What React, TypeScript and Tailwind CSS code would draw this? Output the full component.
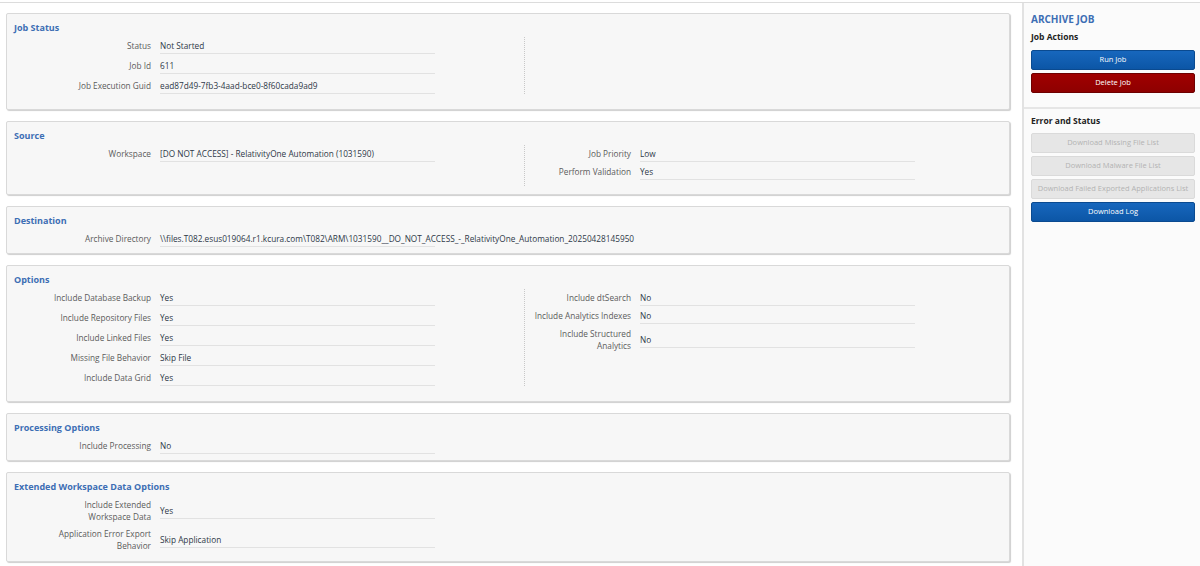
import React from 'react';

type Field = { label: string; value: string };

const font = { fontFamily: '"Open Sans", "Noto Sans", sans-serif' };

function Row({ field, labelWidth, valueWidth }: { field: Field; labelWidth: string; valueWidth: string }) {
  return (
    <div className="flex items-center">
      <div className={`${labelWidth} shrink-0 text-right text-[#5b5b5b] leading-[12px] pt-[3px] pb-[2px] whitespace-pre-line`}>
        {field.label}
      </div>
      <div className={`${valueWidth} ml-[9px] shrink-0 border-b border-[#e2e2e2] pt-[3px] pb-[1px] leading-[12px] text-[#2e3847] whitespace-nowrap`}>
        {field.value}
      </div>
    </div>
  );
}

function Card({
  title,
  height,
  left,
  right,
  split = false,
  tight = false,
}: {
  title: string;
  height: string;
  left: Field[];
  right?: Field[];
  split?: boolean;
  tight?: boolean;
}) {
  return (
    <div className={`${height} shrink-0 bg-[#f7f7f7] border border-[#d9d9d9] rounded-[2px] shadow-[1px_1px_1px_#cfcfcf] pt-[8px] px-[7px]`}>
      <div className="text-[9px] font-bold text-[#3d6eb4] leading-[12px]">{title}</div>
      <div className="flex mt-[3px]">
        <div className={`w-[510px] shrink-0 flex flex-col ${tight ? 'gap-0' : 'gap-[3px]'}`}>
          {left.map((f) => (
            <Row key={f.label} field={f} labelWidth="w-[137px]" valueWidth="w-[275px]" />
          ))}
        </div>
        {split && (
          <div className="flex flex-col gap-[1px] border-l border-dotted border-[#c8c8c8] pb-[6px] self-stretch">
            {(right ?? []).map((f) => (
              <Row key={f.label} field={f} labelWidth="w-[106px]" valueWidth="w-[275px]" />
            ))}
          </div>
        )}
      </div>
    </div>
  );
}

function SideButton({ label, kind }: { label: string; kind: 'blue' | 'red' | 'off' }) {
  const styles = {
    blue: 'bg-gradient-to-b from-[#1767bd] to-[#0c56a6] border-[#0a4a90] text-white',
    red: 'bg-gradient-to-b from-[#a00000] to-[#8e0000] border-[#6e0000] text-white',
    off: 'bg-[#e6e6e6] border-[#dadada] text-[#b3b3b3]',
  }[kind];
  return (
    <div className={`h-[20px] w-[164px] flex items-center justify-center border rounded-[2px] text-[7.5px] whitespace-nowrap ${styles}`}>
      {label}
    </div>
  );
}

export default function App() {
  return (
    <div className="w-[1200px] h-[566px] overflow-hidden bg-white text-[8.25px] flex flex-col" style={font}>
      <div className="h-[3px] shrink-0 bg-white border-b border-[#dcdcdc]" />
      <div className="flex flex-1 min-h-0">
        {/* Main */}
        <div className="w-[1022px] shrink-0 pl-[6px] pr-[12px] pt-[10px] flex flex-col gap-[11px]">
          <Card
            title="Job Status"
            height="h-[97px]"
            split
            left={[
              { label: 'Status', value: 'Not Started' },
              { label: 'Job Id', value: '611' },
              { label: 'Job Execution Guid', value: 'ead87d49-7fb3-4aad-bce0-8f60cada9ad9' },
            ]}
            right={[]}
          />
          <Card
            title="Source"
            height="h-[74px]"
            split
            left={[{ label: 'Workspace', value: '[DO NOT ACCESS] - RelativityOne Automation (1031590)' }]}
            right={[
              { label: 'Job Priority', value: 'Low' },
              { label: 'Perform Validation', value: 'Yes' },
            ]}
          />
          <Card
            title="Destination"
            height="h-[48px]"
            left={[
              {
                label: 'Archive Directory',
                value: '\\\\files.T082.esus019064.r1.kcura.com\\T082\\ARM\\1031590__DO_NOT_ACCESS_-_RelativityOne_Automation_20250428145950',
              },
            ]}
          />
          <Card
            title="Options"
            height="h-[137px]"
            split
            left={[
              { label: 'Include Database Backup', value: 'Yes' },
              { label: 'Include Repository Files', value: 'Yes' },
              { label: 'Include Linked Files', value: 'Yes' },
              { label: 'Missing File Behavior', value: 'Skip File' },
              { label: 'Include Data Grid', value: 'Yes' },
            ]}
            right={[
              { label: 'Include dtSearch', value: 'No' },
              { label: 'Include Analytics Indexes', value: 'No' },
              { label: 'Include Structured\nAnalytics', value: 'No' },
            ]}
          />
          <Card
            title="Processing Options"
            height="h-[48px]"
            left={[{ label: 'Include Processing', value: 'No' }]}
          />
          <Card
            title="Extended Workspace Data Options"
            height="h-[90px]"
            tight
            left={[
              { label: 'Include Extended\nWorkspace Data', value: 'Yes' },
              { label: 'Application Error Export\nBehavior', value: 'Skip Application' },
            ]}
          />
        </div>

        {/* Sidebar */}
        <div className="flex-1 border-l-2 border-[#e2e2e2] bg-[#fbfbfb] flex flex-col">
          <div className="pl-[7px] pr-[6px] pt-[9px] pb-[14px] flex flex-col">
            <div className="text-[10px] font-bold text-[#3d6eb4] leading-[14px]">ARCHIVE JOB</div>
            <div className="text-[8.5px] font-bold text-[#222] leading-[12px] mt-[5px]">Job Actions</div>
            <div className="flex flex-col gap-[3px] mt-[7px]">
              <SideButton label="Run Job" kind="blue" />
              <SideButton label="Delete Job" kind="red" />
            </div>
          </div>
          <div className="border-t-2 border-[#e6e6e6] pl-[7px] pr-[6px] pt-[6px] flex flex-col">
            <div className="text-[8.5px] font-bold text-[#222] leading-[12px]">Error and Status</div>
            <div className="flex flex-col gap-[3px] mt-[6px]">
              <SideButton label="Download Missing File List" kind="off" />
              <SideButton label="Download Malware File List" kind="off" />
              <SideButton label="Download Failed Exported Applications List" kind="off" />
              <SideButton label="Download Log" kind="blue" />
            </div>
          </div>
        </div>
      </div>
    </div>
  );
}
